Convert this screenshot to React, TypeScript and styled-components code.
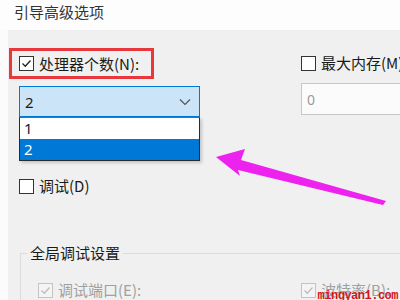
import React from "react";
import styled, { createGlobalStyle } from "styled-components";

const Global = createGlobalStyle`
  html, body { margin: 0; padding: 0; background: #fbfbfb; }
  body { width: 400px; height: 300px; overflow: hidden; font-family: "Noto Sans CJK SC", "Noto Sans", sans-serif; color: #1a1a1a; }
`;

const Page = styled.div`
  position: relative;
  width: 400px;
  height: 300px;
  overflow: hidden;
`;

const Header = styled.div`
  height: 30px;
  padding-left: 14px;
  font-size: 15px;
  line-height: 24px;
  color: #333;
  background: #fdfdfd;
`;

const Panel = styled.div`
  margin-left: 8px;
  height: 270px;
  background: #f0f0f0;
  position: relative;
`;

const Top = styled.div`
  display: grid;
  grid-template-columns: 293px 1fr;
  height: 210px;
`;

const LeftCol = styled.div`
  display: flex;
  flex-direction: column;
  align-items: flex-start;
  padding-top: 18px;
  position: relative;
`;

const RightCol = styled.div`
  display: flex;
  flex-direction: column;
  padding-top: 25px;
`;

const RedBox = styled.div`
  margin-left: 1px;
  width: 132px;
  height: 25px;
  border: 3px solid #e8383d;
  display: flex;
  align-items: center;
  padding-left: 7px;
`;

const Row = styled.label<{ $disabled?: boolean }>`
  display: flex;
  align-items: center;
  gap: 5px;
  font-size: 15px;
  line-height: 16px;
  white-space: nowrap;
  color: ${(p) => (p.$disabled ? "#a0a0a0" : "#1a1a1a")};
`;

const Box = styled.span<{ $disabled?: boolean }>`
  width: 13px;
  height: 13px;
  border: 1px solid ${(p) => (p.$disabled ? "#c4c4c4" : "#333")};
  background: ${(p) => (p.$disabled ? "#f4f4f4" : "#fff")};
  display: inline-flex;
  align-items: center;
  justify-content: center;
  flex: none;
`;

const Check = ({ checked, disabled }: { checked?: boolean; disabled?: boolean }) => (
  <Box $disabled={disabled}>
    {checked && (
      <svg width="11" height="11" viewBox="0 0 11 11">
        <path d="M1.5 5.5 L4.3 8.3 L9.5 2.5" fill="none" stroke={disabled ? "#bdbdbd" : "#222"} strokeWidth="1.3" />
      </svg>
    )}
  </Box>
);

const ComboWrap = styled.div`
  margin-left: 11px;
  margin-top: 7px;
  position: relative;
  width: 181px;
`;

const Combo = styled.div`
  height: 29px;
  border: 1px solid #0078d7;
  background: #cce4f7;
  display: flex;
  align-items: center;
  justify-content: space-between;
  padding: 0 8px 0 5px;
  font-size: 15px;
  font-family: "Noto Sans", sans-serif;
`;

const List = styled.div`
  position: absolute;
  left: 0;
  top: 31px;
  width: 179px;
  border: 1px solid #2b2b2b;
  border-top: 1px solid #6a6a6a;
  background: #fff;
  box-shadow: 2px 2px 3px rgba(0, 0, 0, 0.18);
`;

const Item = styled.div<{ $selected?: boolean }>`
  height: 21px;
  line-height: 21px;
  padding-left: 4px;
  font-size: 15px;
  font-family: "Noto Sans", sans-serif;
  background: ${(p) => (p.$selected ? "#0078d7" : "#fff")};
  color: ${(p) => (p.$selected ? "#fff" : "#1a1a1a")};
`;

const DebugRow = styled.div`
  margin-left: 11px;
  margin-top: 61px;
`;

const Input = styled.div`
  margin-top: 12px;
  height: 30px;
  border: 1px solid #c8c8c8;
  border-right: none;
  background: #fbfbfb;
  display: flex;
  align-items: center;
  padding-left: 5px;
  font-size: 14px;
  color: #9a9a9a;
  font-family: "Noto Sans", sans-serif;
`;

const Group = styled.fieldset`
  margin: 4px 0 0 12px;
  padding: 0;
  border: none;
  border-top: 1px solid #dcdcdc;
  border-left: 1px solid #dcdcdc;
  height: 60px;
`;

const GroupBody = styled.div`
  display: grid;
  grid-template-columns: 263px 1fr;
  align-items: start;
  padding: 20px 0 0 17px;
`;

const Legend = styled.legend`
  font-size: 15px;
  color: #1a1a1a;
  padding: 0 3px;
  margin-left: 6px;
  line-height: 18px;
`;

const Arrow = styled.svg`
  position: absolute;
  left: 0;
  top: 0;
  pointer-events: none;
`;

const Watermark = styled.div`
  position: absolute;
  right: 2px;
  bottom: -3px;
  font-family: "Liberation Mono", monospace;
  font-size: 12px;
  font-weight: bold;
  color: #d0181a;
  letter-spacing: -0.5px;
`;

export default function App() {
  return (
    <Page>
      <Global />
      <Header>引导高级选项</Header>
      <Panel>
        <Top>
          <LeftCol>
            <RedBox>
              <Row>
                <Check checked />
                处理器个数(N):
              </Row>
            </RedBox>
            <ComboWrap>
              <Combo>
                <span>2</span>
                <svg width="12" height="8" viewBox="0 0 12 8">
                  <path d="M1 1.5 L6 6.5 L11 1.5" fill="none" stroke="#555" strokeWidth="1.2" />
                </svg>
              </Combo>
              <List>
                <Item>1</Item>
                <Item $selected>2</Item>
              </List>
            </ComboWrap>
            <DebugRow>
              <Row>
                <Check />
                调试(D)
              </Row>
            </DebugRow>
          </LeftCol>
          <RightCol>
            <Row>
              <Check />
              最大内存(M)
            </Row>
            <Input>0</Input>
          </RightCol>
        </Top>
        <Group>
          <Legend>全局调试设置</Legend>
          <GroupBody>
            <Row $disabled>
              <Check checked disabled />
              调试端口(E):
            </Row>
            <Row $disabled>
              <Check checked disabled />
              波特率(B):
            </Row>
          </GroupBody>
        </Group>
      </Panel>
      <Arrow width="400" height="300" viewBox="0 0 400 300">
        <polygon
          points="216,157 245,149 241,160 386,201 383,205 238,170 240,176"
          fill="#ee22ee"
        />
      </Arrow>
      <Watermark>mingyan1.com</Watermark>
    </Page>
  );
}
